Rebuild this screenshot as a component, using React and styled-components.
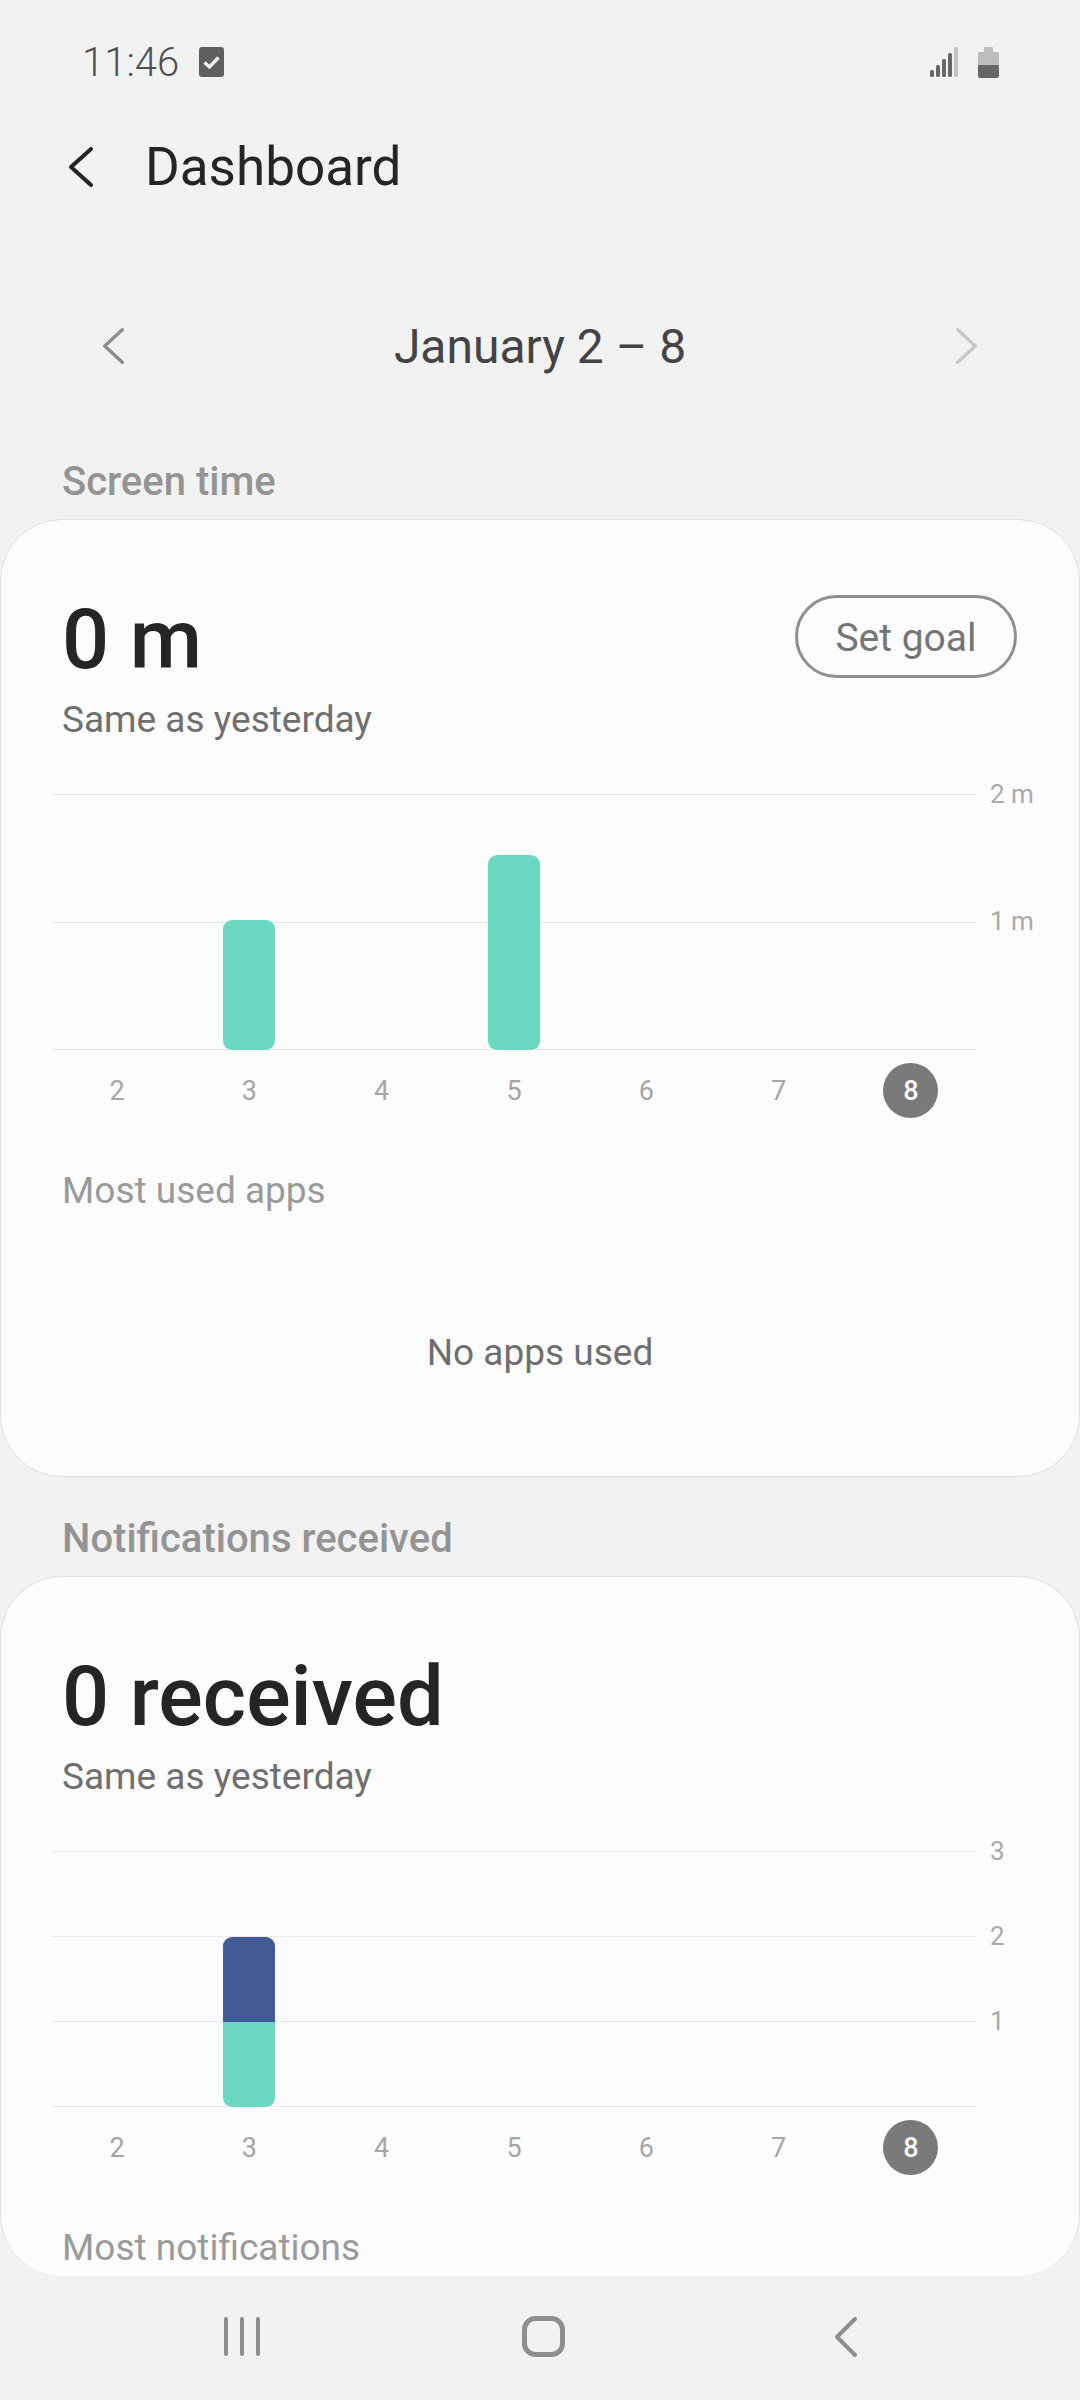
import React from 'react'
import styled, { createGlobalStyle } from 'styled-components'

const GlobalStyle = createGlobalStyle`
    html, body { margin: 0; padding: 0; background: #f2f2f2; }
    body { font-family: Roboto, "Liberation Sans", sans-serif; }
`

const Page = styled.div`
    width: 1080px;
    height: 2400px;
    overflow: hidden;
    display: flex;
    flex-direction: column;
    background: #f2f2f2;
`
const StatusBar = styled.div`
    height: 122px;
    flex: none;
    display: flex;
    align-items: center;
    justify-content: space-between;
    padding: 2px 81px 0 82px;
    box-sizing: border-box;
`
const StatusGroup = styled.div`
    display: flex;
    align-items: center;
    gap: ${props => props.$gap}px;
`
const Clock = styled.span`
    font-size: 40px;
    font-weight: 300;
    color: #4f4f4f;
`
const Header = styled.div`
    height: 90px;
    flex: none;
    display: flex;
    align-items: center;
    gap: 52px;
    padding-left: 69px;
`
const Title = styled.h1`
    margin: 0;
    font-size: 53px;
    font-weight: 400;
    color: #252525;
`
const DateRow = styled.div`
    height: 90px;
    flex: none;
    margin-top: 89px;
    display: flex;
    align-items: center;
    justify-content: space-between;
    padding: 0 103px;
    box-sizing: border-box;
`
const DateText = styled.span`
    font-size: 48px;
    color: #444;
`
const SectionLabel = styled.div`
    height: 50px;
    flex: none;
    line-height: 52px;
    margin-top: ${props => props.$top}px;
    margin-bottom: 13px;
    padding-left: 62px;
    font-size: 40px;
    font-weight: 500;
    color: #949494;
`
const Card = styled.section`
    flex: none;
    height: ${props => props.$height}px;
    box-sizing: border-box;
    overflow: hidden;
    background: #fcfcfc;
    border: 1px solid #e0e0e0;
    border-bottom: ${props => (props.$clipped ? 'none' : '1px solid #e0e0e0')};
    border-radius: 62px;
    padding-top: 70px;
`
const CardHead = styled.div`
    display: flex;
    align-items: center;
    justify-content: space-between;
    padding: 0 62px 0 61px;
`
const BigValue = styled.div`
    font-size: 83px;
    line-height: 100px;
    font-weight: 500;
    color: #252525;
`
const GoalButton = styled.button`
    width: 222px;
    height: 83px;
    margin-top: -7px;
    padding: 3px 0 0;
    background: none;
    border: 3px solid #8f8f8f;
    border-radius: 42px;
    font-family: inherit;
    font-size: 39px;
    color: #757575;
`
const SubText = styled.div`
    margin-top: 8px;
    padding-left: 61px;
    font-size: 37px;
    line-height: 44px;
    color: #6f6f6f;
`
const Plot = styled.div`
    display: grid;
    height: 256px;
    margin: 52px 0 0 50px;
`
const GridLines = styled.div`
    grid-area: 1 / 1;
    display: flex;
    flex-direction: column;
    justify-content: space-between;
`
const GridLine = styled.div`
    height: 1px;
    display: flex;
    align-items: center;
    gap: 13px;
    &::before {
        content: '';
        width: 926px;
        height: 1px;
        background: #e9e9e9;
    }
`
const AxisLabel = styled.span`
    font-size: 26px;
    line-height: 0;
    padding-bottom: 2px;
    color: #aaa;
`
const Bars = styled.div`
    grid-area: 1 / 1;
    width: 926px;
    display: grid;
    grid-template-columns: repeat(7, 1fr);
    align-items: end;
    justify-items: center;
`
const Bar = styled.div`
    width: 52px;
    display: flex;
    flex-direction: column;
    overflow: hidden;
    border-radius: 9px;
    grid-column: ${props => props.$column};
`
const BarPart = styled.div`
    background: ${props => props.$color};
`
const DayRow = styled.div`
    width: 926px;
    margin: 13px 0 0 50px;
    display: grid;
    grid-template-columns: repeat(7, 1fr);
    justify-items: center;
`
const Day = styled.div`
    width: 55px;
    height: 55px;
    display: flex;
    align-items: center;
    justify-content: center;
    border-radius: 50%;
    font-size: 27px;
    font-weight: ${props => (props.$today ? 500 : 400)};
    color: ${props => (props.$today ? '#fff' : '#a6a6a6')};
    background: ${props => (props.$today ? '#7a7a7a' : 'transparent')};
`
const MutedHeading = styled.div`
    margin-top: 51px;
    padding-left: 61px;
    font-size: 37px;
    line-height: 44px;
    color: #9a9a9a;
`
const EmptyNote = styled.div`
    margin-top: 118px;
    text-align: center;
    font-size: 37px;
    line-height: 44px;
    color: #6f6f6f;
`
const NavBar = styled.nav`
    flex: 1;
    display: grid;
    grid-template-columns: 224px 36px 262px 43px 270px 22px;
    align-items: center;
    height: 124px;
`
const NavSlot = styled.div`
    grid-column: ${props => props.$column};
    display: flex;
    margin-top: -3px;
`

const Chevron = ({ dir = 'left', w, h, color, stroke }) => (
    <svg width={w} height={h} viewBox={`0 0 ${w} ${h}`} fill="none">
        <path
            d={dir === 'left'
                ? `M${w - stroke / 2} ${stroke / 2} L${stroke / 2} ${h / 2} L${w - stroke / 2} ${h - stroke / 2}`
                : `M${stroke / 2} ${stroke / 2} L${w - stroke / 2} ${h / 2} L${stroke / 2} ${h - stroke / 2}`}
            stroke={color}
            strokeWidth={stroke}
            strokeLinecap="round"
            strokeLinejoin="round"
        />
    </svg>
)

const CheckIcon = () => (
    <svg width="25" height="30" viewBox="0 0 25 30">
        <rect width="25" height="30" rx="3" fill="#5f5f5f" />
        <path d="M5.5 15.5 L10.5 20 L19.5 10.5" stroke="#f2f2f2" strokeWidth="3.4" fill="none" />
    </svg>
)

const SignalIcon = () => (
    <svg width="28" height="30" viewBox="0 0 28 30">
        <rect x="0" y="23" width="4" height="7" rx="1.5" fill="#666" />
        <rect x="6" y="18" width="4" height="12" rx="1.5" fill="#666" />
        <rect x="12" y="12" width="4" height="18" rx="1.5" fill="#666" />
        <rect x="18" y="6" width="4" height="24" rx="1.5" fill="#666" />
        <rect x="24" y="0" width="4" height="30" rx="1.5" fill="#c4c4c4" />
    </svg>
)

const BatteryIcon = () => (
    <svg width="21" height="31" viewBox="0 0 21 31">
        <rect x="6" y="0" width="9" height="6" rx="1" fill="#bdbdbd" />
        <path d="M2 5 H19 a2 2 0 0 1 2 2 V18 H0 V7 a2 2 0 0 1 2 -2 Z" fill="#bdbdbd" />
        <path d="M0 18 H21 V29 a2 2 0 0 1 -2 2 H2 a2 2 0 0 1 -2 -2 Z" fill="#666" />
    </svg>
)

const RecentsIcon = () => (
    <svg width="36" height="39" viewBox="0 0 36 39">
        <g stroke="#8e8e8e" strokeWidth="4" strokeLinecap="round">
            <path d="M2 2 V37" />
            <path d="M18 2 V37" />
            <path d="M34 2 V37" />
        </g>
    </svg>
)

const HomeIcon = () => (
    <svg width="43" height="41" viewBox="0 0 43 41">
        <rect x="2.5" y="2.5" width="38" height="36" rx="11" fill="none" stroke="#8e8e8e" strokeWidth="5" />
    </svg>
)

const GREEN = '#6bd9c2'
const BLUE = '#405b94'
const DAYS = [2, 3, 4, 5, 6, 7, 8]

function Chart({ axis, bars }) {
    return (
        <>
            <Plot>
                <GridLines>
                    {axis.map((label, i) => (
                        <GridLine key={i}>
                            {label && <AxisLabel>{label}</AxisLabel>}
                        </GridLine>
                    ))}
                </GridLines>
                <Bars>
                    {bars.map(bar => (
                        <Bar key={bar.column} $column={bar.column}>
                            {bar.parts.map((part, i) => (
                                <BarPart key={i} $color={part.color} style={{ height: part.height }} />
                            ))}
                        </Bar>
                    ))}
                </Bars>
            </Plot>
            <DayRow>
                {DAYS.map(day => (
                    <Day key={day} $today={day === 8}>{day}</Day>
                ))}
            </DayRow>
        </>
    )
}

export default function App() {
    return (
        <Page>
            <GlobalStyle />
            <StatusBar>
                <StatusGroup $gap={20}>
                    <Clock>11:46</Clock>
                    <CheckIcon />
                </StatusGroup>
                <StatusGroup $gap={20}>
                    <SignalIcon />
                    <BatteryIcon />
                </StatusGroup>
            </StatusBar>
            <Header>
                <Chevron w={24} h={40} color="#252525" stroke={4} />
                <Title>Dashboard</Title>
            </Header>
            <DateRow>
                <Chevron w={21} h={36} color="#8e8e8e" stroke={3.5} />
                <DateText>January 2 – 8</DateText>
                <Chevron dir="right" w={21} h={36} color="#c9c9c9" stroke={3.5} />
            </DateRow>
            <SectionLabel $top={65}>Screen time</SectionLabel>
            <Card $height={958}>
                <CardHead>
                    <BigValue>0 m</BigValue>
                    <GoalButton>Set goal</GoalButton>
                </CardHead>
                <SubText>Same as yesterday</SubText>
                <Chart
                    axis={['2 m', '1 m', '']}
                    bars={[
                        { column: 2, parts: [{ color: GREEN, height: 130 }] },
                        { column: 4, parts: [{ color: GREEN, height: 195 }] },
                    ]}
                />
                <MutedHeading>Most used apps</MutedHeading>
                <EmptyNote>No apps used</EmptyNote>
            </Card>
            <SectionLabel $top={36}>Notifications received</SectionLabel>
            <Card $height={700} $clipped>
                <CardHead>
                    <BigValue>0 received</BigValue>
                </CardHead>
                <SubText>Same as yesterday</SubText>
                <Chart
                    axis={['3', '2', '1', '']}
                    bars={[
                        { column: 2, parts: [{ color: BLUE, height: 85 }, { color: GREEN, height: 85 }] },
                    ]}
                />
                <MutedHeading>Most notifications</MutedHeading>
            </Card>
            <NavBar>
                <NavSlot $column={2}><RecentsIcon /></NavSlot>
                <NavSlot $column={4}><HomeIcon /></NavSlot>
                <NavSlot $column={6}><Chevron w={22} h={40} color="#8e8e8e" stroke={4} /></NavSlot>
            </NavBar>
        </Page>
    )
}
